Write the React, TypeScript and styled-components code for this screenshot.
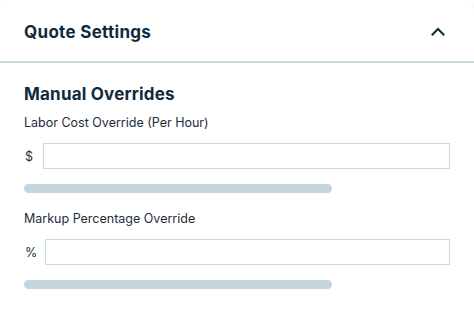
import styled, { createGlobalStyle } from "styled-components";

const GlobalStyle = createGlobalStyle`
  html, body {
    margin: 0;
    padding: 0;
    background: #ffffff;
  }
  body {
    font-family: "Inter", "Noto Sans", sans-serif;
    color: #0f2a3b;
  }
`;

const Card = styled.section`
  width: 474px;
  height: 309px;
  box-sizing: border-box;
  background: #fff;
  border-radius: 10px 10px 0 0;
  box-shadow: 0 0 0 1px rgba(0, 0, 0, 0.03);
  overflow: hidden;
`;

const Header = styled.header`
  height: 63px;
  display: flex;
  align-items: center;
  justify-content: space-between;
  padding: 2px 24px 0;
  box-sizing: border-box;
  border-bottom: 2px solid #c9d9e1;
`;

const Title = styled.h2`
  margin: 0;
  font-size: 17px;
  font-weight: 700;
  letter-spacing: 0.3px;
  color: #0f2a3b;
`;

const Toggle = styled.button`
  border: 0;
  background: none;
  padding: 0;
  margin-right: 5px;
  display: flex;
  color: #0f2a3b;
  cursor: pointer;
`;

const Body = styled.div`
  padding: 19px 24px 0;
`;

const SectionTitle = styled.h3`
  margin: 0 0 9px;
  font-size: 17px;
  font-weight: 700;
  line-height: 24px;
  letter-spacing: 0.2px;
  color: #0f2a3b;
`;

const Field = styled.div`
  display: flex;
  flex-direction: column;
  margin-bottom: 18px;
`;

const Label = styled.label`
  font-size: 12.5px;
  line-height: 16px;
  color: #1b2e3b;
  margin-bottom: 12px;
`;

const InputRow = styled.div<{ $gap: number }>`
  display: flex;
  align-items: center;
  gap: ${(p) => p.$gap}px;
`;

const Unit = styled.span`
  font-size: 12.5px;
  color: #1b2e3b;
  width: 10px;
  padding-left: 1px;
`;

const Input = styled.input`
  flex: 1;
  height: 26px;
  box-sizing: border-box;
  border: 1px solid #c6dae3;
  border-radius: 0;
  outline: none;
  padding: 0 8px;
  font: inherit;
`;

const Bar = styled.div`
  margin-top: 15px;
  width: 308px;
  height: 9px;
  border-radius: 5px;
  background: #c5d5dd;
`;

function ChevronUp() {
  return (
    <svg width="14" height="9" viewBox="0 0 14 9" fill="none">
      <path d="M1.5 7.5L7 2l5.5 5.5" stroke="currentColor" strokeWidth="2" strokeLinecap="square" />
    </svg>
  );
}

export default function App() {
  return (
    <>
      <GlobalStyle />
      <Card>
        <Header>
          <Title>Quote Settings</Title>
          <Toggle aria-label="Collapse">
            <ChevronUp />
          </Toggle>
        </Header>
        <Body>
          <SectionTitle>Manual Overrides</SectionTitle>
          <Field>
            <Label>Labor Cost Override (Per Hour)</Label>
            <InputRow $gap={8}>
              <Unit>$</Unit>
              <Input />
            </InputRow>
            <Bar />
          </Field>
          <Field>
            <Label>Markup Percentage Override</Label>
            <InputRow $gap={10}>
              <Unit>%</Unit>
              <Input />
            </InputRow>
            <Bar />
          </Field>
        </Body>
      </Card>
    </>
  );
}
